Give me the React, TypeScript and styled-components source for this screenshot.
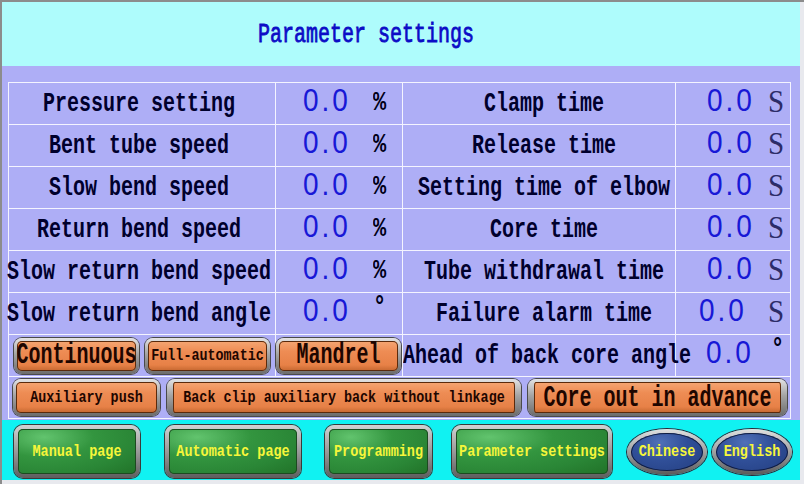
import React from 'react';
import styled, { createGlobalStyle } from 'styled-components';

const GlobalStyle = createGlobalStyle`
  html, body {
    margin: 0;
    padding: 0;
    background: #e8e9ee;
  }
  body {
    width: 804px;
    height: 484px;
    overflow: hidden;
    font-family: "Liberation Mono", "DejaVu Sans Mono", monospace;
  }
`;

const Screen = styled.div`
  width: 804px;
  height: 484px;
  box-sizing: border-box;
  border-left: 2px solid #8c8c8c;
  border-top: 2px solid #8c8c8c;
  padding: 0 4px 4px 0;
  display: flex;
  flex-direction: column;
`;

const Header = styled.header`
  height: 64px;
  flex: none;
  display: flex;
  align-items: center;
  padding-left: 256px;
  background: #aefcfc;
`;

const Title = styled.h1`
  margin: 0;
  font-size: 20px;
  font-weight: normal;
  color: #0c0cc6;
  white-space: nowrap;
  -webkit-text-stroke: 0.6px #0c0cc6;
`;

// stretches the narrow mono glyphs up to the panel's tall type
const Tall = styled.span<{ $k?: number }>`
  display: inline-block;
  transform: scaleY(${(p) => p.$k ?? 1.4});
  white-space: nowrap;
`;

const Body = styled.main`
  height: 354px;
  flex: none;
  box-sizing: border-box;
  padding: 16px 0 0 6px;
  background: #aeaef6;
`;

const Table = styled.div`
  display: grid;
  grid-template-columns: 267px 127px 273px 115px;
  grid-auto-rows: 42px;
  width: 783px;
  box-sizing: border-box;
  border-top: 1px solid #f4f4ff;
  border-left: 1px solid #f4f4ff;
`;

const Cell = styled.div<{ $span?: number }>`
  box-sizing: border-box;
  border-right: 1px solid #f4f4ff;
  border-bottom: 1px solid #f4f4ff;
  grid-column: span ${(p) => p.$span ?? 1};
  display: flex;
  align-items: center;
  min-width: 0;
`;

const Label = styled(Cell)<{ $shift: number }>`
  justify-content: center;
  padding-left: ${(p) => Math.max(p.$shift, 0)}px;
  padding-right: ${(p) => Math.max(-p.$shift, 0)}px;
  font-size: 20px;
  font-weight: bold;
  color: #00002c;
  overflow: visible;
`;

const LongLabel = styled(Cell)`
  justify-content: flex-start;
  font-size: 20px;
  font-weight: bold;
  color: #00002c;
  overflow: visible;
`;

const ValueCell = styled(Cell)<{ $pad: number; $col: number }>`
  display: grid;
  grid-template-columns: ${(p) => p.$col}px 1fr;
  align-items: center;
  padding-left: ${(p) => p.$pad}px;
`;

const Number = styled.span`
  font-family: "Liberation Sans", Arial, sans-serif;
  font-size: 28px;
  letter-spacing: 3px;
  color: #1818d6;
  line-height: 1;
  padding-bottom: 6px;
`;

const Unit = styled.span<{ $kind: 'pct' | 'sec' | 'deg' }>`
  line-height: 1;
  font-family: ${(p) =>
    p.$kind === 'sec' ? '"Liberation Serif", serif' : '"Liberation Mono", monospace'};
  font-size: ${(p) => (p.$kind === 'sec' ? 29 : 22)}px;
  font-weight: ${(p) => (p.$kind === 'sec' ? 'normal' : 'bold')};
  color: ${(p) => (p.$kind === 'sec' ? '#2c2c68' : '#000018')};
  align-self: ${(p) => (p.$kind === 'deg' ? 'start' : 'center')};
  padding-top: ${(p) => (p.$kind === 'deg' ? 5 : 0)}px;
  padding-bottom: ${(p) => (p.$kind === 'sec' ? 4 : 0)}px;
`;

const KeyRow = styled(Cell)<{ $pl: number; $gap: number }>`
  padding-left: ${(p) => p.$pl}px;
  gap: ${(p) => p.$gap}px;
`;

const Key = styled.button<{ $w: number; $h: number; $side?: number }>`
  width: ${(p) => p.$w}px;
  height: ${(p) => p.$h}px;
  flex: none;
  box-sizing: border-box;
  margin: 0;
  padding: 0;
  display: flex;
  align-items: center;
  justify-content: center;
  overflow: visible;
  font-family: "Liberation Mono", "DejaVu Sans Mono", monospace;
  font-weight: bold;
  cursor: pointer;
  border: 3px solid transparent;
  border-left-width: ${(p) => p.$side ?? 3}px;
  border-right-width: ${(p) => p.$side ?? 3}px;
`;

const OrangeKey = styled(Key)<{ $size: number }>`
  font-size: ${(p) => p.$size}px;
  color: #1e0600;
  border-radius: 8px;
  background:
    linear-gradient(180deg, #f5a673 0%, #ee8c54 35%, #e78147 80%, #c4662f 100%) padding-box,
    linear-gradient(180deg, #e4e4e4 0%, #a4a4a4 45%, #6c6c6c 100%) border-box;
  box-shadow: 0 0 0 1px #4a4a4a, inset 0 0 0 1px #5a2a0c;
`;

const GreenKey = styled(Key)`
  font-size: 13.5px;
  color: #f6f63a;
  border-width: 4px;
  border-radius: 9px;
  background:
    radial-gradient(ellipse at 22% 18%, #62c46e 0%, #33953f 38%, #2a8636 70%, #217228 100%) padding-box,
    linear-gradient(180deg, #d2d2d2 0%, #9a9a9a 50%, #5e5e5e 100%) border-box;
  box-shadow: 0 0 0 1px #3a3a3a, inset 0 0 0 1px #1c4a20;
`;

const LangKey = styled(Key)`
  font-size: 13.5px;
  color: #f6f63a;
  border-width: 4px;
  border-radius: 50%;
  background:
    radial-gradient(ellipse at 40% 25%, #5070b8 0%, #304f98 45%, #233e80 100%) padding-box,
    linear-gradient(180deg, #e0e0e0 0%, #a0a0a0 50%, #5a5a5a 100%) border-box;
  box-shadow: 0 0 0 1px #2a2a3a, inset 0 0 0 1px #101c40;
`;

const Footer = styled.nav`
  height: 60px;
  flex: none;
  box-sizing: border-box;
  padding-top: 3px;
  display: flex;
  align-items: center;
  background: #10f2f2;
`;

const Slot = styled.div<{ $lead: number }>`
  margin-left: ${(p) => p.$lead}px;
  display: flex;
`;

type Row = {
  left: string;
  right: string;
  leftUnit: 'pct' | 'deg';
};

const rows: Row[] = [
  { left: 'Pressure setting', right: 'Clamp time', leftUnit: 'pct' },
  { left: 'Bent tube speed', right: 'Release time', leftUnit: 'pct' },
  { left: 'Slow bend speed', right: 'Setting time of elbow', leftUnit: 'pct' },
  { left: 'Return bend speed', right: 'Core time', leftUnit: 'pct' },
  { left: 'Slow return bend speed', right: 'Tube withdrawal time', leftUnit: 'pct' },
  { left: 'Slow return bend angle', right: 'Failure alarm time', leftUnit: 'deg' },
];

const unitGlyph = { pct: '%', sec: 'S', deg: '°' };

const Value: React.FC<{ pad: number; col: number; unit: 'pct' | 'sec' | 'deg' }> = ({
  pad,
  col,
  unit,
}) => (
  <ValueCell $pad={pad} $col={col}>
    <Number>
      <Tall $k={1.12}>0.0</Tall>
    </Number>
    <Unit $kind={unit}>
      <Tall $k={unit === 'sec' ? 1.12 : 1.25}>{unitGlyph[unit]}</Tall>
    </Unit>
  </ValueCell>
);

const navKeys = [
  { text: 'Manual page', w: 126, lead: 12 },
  { text: 'Automatic page', w: 136, lead: 25 },
  { text: 'Programming', w: 107, lead: 24 },
  { text: 'Parameter settings', w: 160, lead: 20 },
];

const App: React.FC = () => (
  <>
    <GlobalStyle />
    <Screen>
      <Header>
        <Title>
          <Tall $k={1.35}>Parameter settings</Tall>
        </Title>
      </Header>

      <Body>
        <Table>
          {rows.map((r, i) => (
            <React.Fragment key={r.left}>
              <Label $shift={-6}>
                <Tall>{r.left}</Tall>
              </Label>
              <Value pad={27} col={70} unit={r.leftUnit} />
              <Label $shift={10}>
                <Tall>{r.right}</Tall>
              </Label>
              <Value pad={i === 5 ? 23 : 31} col={i === 5 ? 69 : 61} unit="sec" />
            </React.Fragment>
          ))}

          <KeyRow $pl={5} $gap={6}>
            <OrangeKey $w={125} $h={36} $size={20}>
              <Tall $k={1.45}>Continuous</Tall>
            </OrangeKey>
            <OrangeKey $w={125} $h={36} $size={13.4}>
              <Tall $k={1.3}>Full-automatic</Tall>
            </OrangeKey>
          </KeyRow>
          <KeyRow $pl={0} $gap={0}>
            <OrangeKey $w={125} $h={36} $size={20}>
              <Tall $k={1.45}>Mandrel</Tall>
            </OrangeKey>
          </KeyRow>
          <LongLabel>
            <Tall>Ahead of back core angle</Tall>
          </LongLabel>
          <Value pad={30} col={65} unit="deg" />

          <KeyRow $span={4} $pl={4} $gap={7}>
            <OrangeKey $w={147} $h={37} $size={13.4}>
              <Tall $k={1.3}>Auxiliary push</Tall>
            </OrangeKey>
            <OrangeKey $w={354} $h={37} $size={13.4} $side={6}>
              <Tall $k={1.3}>Back clip auxiliary back without linkage</Tall>
            </OrangeKey>
            <OrangeKey $w={259} $h={37} $size={20} $side={6}>
              <Tall $k={1.5}>Core out in advance</Tall>
            </OrangeKey>
          </KeyRow>
        </Table>
      </Body>

      <Footer>
        {navKeys.map((k) => (
          <Slot key={k.text} $lead={k.lead}>
            <GreenKey $w={k.w} $h={53}>
              <Tall $k={1.25}>{k.text}</Tall>
            </GreenKey>
          </Slot>
        ))}
        <Slot $lead={15}>
          <LangKey $w={80} $h={46}>
            <Tall $k={1.25}>Chinese</Tall>
          </LangKey>
        </Slot>
        <Slot $lead={5}>
          <LangKey $w={80} $h={46}>
            <Tall $k={1.25}>English</Tall>
          </LangKey>
        </Slot>
      </Footer>
    </Screen>
  </>
);

export default App;
